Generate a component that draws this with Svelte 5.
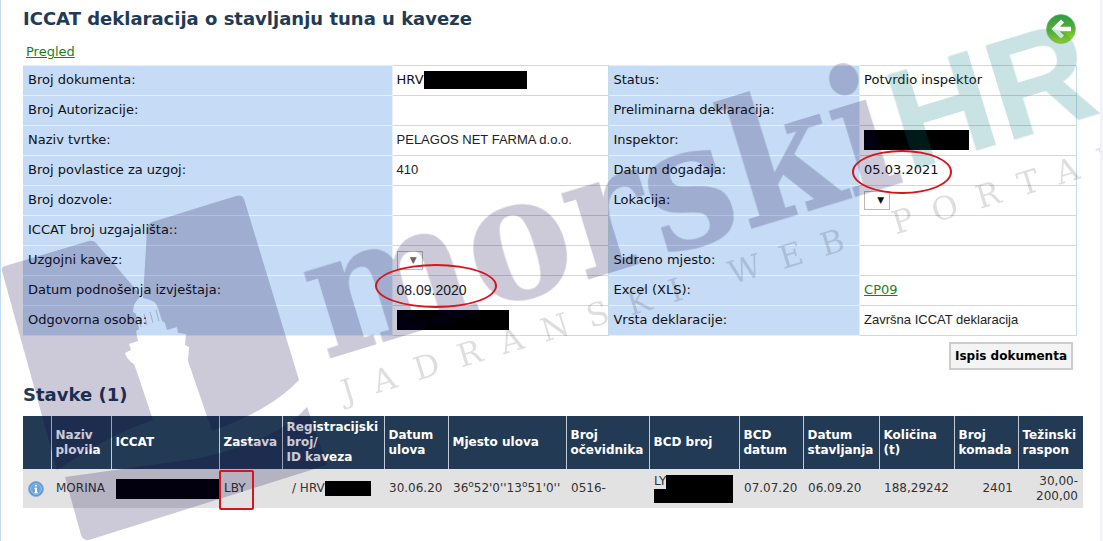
<script>
	const ROWS = [
		[
			{ label: 'Broj dokumenta:', text: 'HRV', hidden: 103 },
			{ label: 'Status:', text: 'Potvrdio inspektor' }
		],
		[{ label: 'Broj Autorizacije:' }, { label: 'Preliminarna deklaracija:' }],
		[
			{ label: 'Naziv tvrtke:', text: 'PELAGOS NET FARMA d.o.o.', plain: true },
			{ label: 'Inspektor:', hidden: 105, tall: true }
		],
		[
			{ label: 'Broj povlastice za uzgoj:', text: '410', plain: true },
			{ label: 'Datum događaja:', text: '05.03.2021', ring: 'small' }
		],
		[{ label: 'Broj dozvole:' }, { label: 'Lokacija:', select: 'lokacija' }],
		[{ label: 'ICCAT broj uzgajališta::' }, { label: '' }],
		[{ label: 'Uzgojni kavez:', select: 'kavez', muted: true }, { label: 'Sidreno mjesto:' }],
		[
			{ label: 'Datum podnošenja izvještaja:', text: '08.09.2020', plain: true, big: true, ring: 'large' },
			{ label: 'Excel (XLS):', link: 'CP09' }
		],
		[
			{ label: 'Odgovorna osoba:', hidden: 112, tall: true },
			{ label: 'Vrsta deklaracije:', text: 'Završna ICCAT deklaracija', plain: true }
		]
	];

	// w is the relative width of the column
	const COLUMNS = [
		{ name: '', w: 28 },
		{ name: 'Naziv plovila', w: 60 },
		{ name: 'ICCAT', w: 108 },
		{ name: 'Zastava', w: 63 },
		{ name: 'Registracijski broj/\nID kaveza', w: 102 },
		{ name: 'Datum ulova', w: 64 },
		{ name: 'Mjesto ulova', w: 118 },
		{ name: 'Broj očevidnika', w: 83 },
		{ name: 'BCD broj', w: 90 },
		{ name: 'BCD datum', w: 64 },
		{ name: 'Datum stavljanja', w: 76 },
		{ name: 'Količina (t)', w: 75 },
		{ name: 'Broj komada', w: 64 },
		{ name: 'Težinski raspon', w: 65 }
	];
	const total = COLUMNS.reduce((sum, c) => sum + c.w, 0);
</script>

<main class="page">
	<header class="top">
		<h1>ICCAT deklaracija o stavljanju tuna u kaveze</h1>
		<a class="back" href="#natrag" aria-label="Natrag">
			<svg viewBox="0 0 30 30" width="30" height="30">
				<defs>
					<linearGradient id="green" x1="0" y1="0" x2="0" y2="1">
						<stop offset="0" stop-color="#2a9a4b" />
						<stop offset="0.45" stop-color="#4fae35" />
						<stop offset="1" stop-color="#b2e012" />
					</linearGradient>
				</defs>
				<circle cx="15" cy="15" r="14.5" fill="url(#green)" stroke="#7cc06a" stroke-width="0.6" />
				<path d="M16.5 7 L8.5 15 L16.5 23 M9 15 H25" fill="none" stroke="#fff" stroke-width="4.4" />
			</svg>
		</a>
	</header>

	<nav><a href="#pregled">Pregled</a></nav>

	<table class="form">
		<colgroup>
			<col class="wide" /><col class="value" /><col class="narrow" /><col class="value" />
		</colgroup>
		<tbody>
			{#each ROWS as row}
				<tr>
					{#each row as cell}
						<th scope="row">
							{#if cell.select}
								<label for={cell.select}>{cell.label}</label>
							{:else}
								{cell.label}
							{/if}
						</th>
						<td>
							<div class="field" class:plain={cell.plain} class:big={cell.big}>
								{#if cell.text}<span class={cell.ring ? `ring ring-${cell.ring}` : ''}>{cell.text}</span>{/if}
								{#if cell.hidden}<span class="redacted" class:tall={cell.tall} style="width: {cell.hidden}px"></span>{/if}
								{#if cell.link}<a href="#xls">{cell.link}</a>{/if}
								{#if cell.select}
									<span class="picker" class:muted={cell.muted}>
										<select id={cell.select}><option></option></select>
									</span>
								{/if}
							</div>
						</td>
					{/each}
				</tr>
			{/each}
		</tbody>
	</table>

	<div class="actions">
		<button type="button">Ispis dokumenta</button>
	</div>

	<h2>Stavke (1)</h2>

	<table class="items">
		<colgroup>
			{#each COLUMNS as c}<col style="width: {(c.w / total) * 100}%" />{/each}
		</colgroup>
		<thead>
			<tr>
				{#each COLUMNS as c}<th scope="col">{c.name}</th>{/each}
			</tr>
		</thead>
		<tbody>
			<tr>
				<td>
					<svg class="info" viewBox="0 0 16 16" width="16" height="16" role="img" aria-label="Info">
						<circle cx="8" cy="8" r="7.5" fill="#4f8fd0" stroke="#8db4de" />
						<circle cx="8" cy="8" r="5.5" fill="#6ba5de" stroke="#a9cbec" stroke-width="0.8" />
						<path d="M7 4h2v1.6H7z M6.3 6.8H9v4.4h.8v1H6.3v-1H7V7.8h-.7z" fill="#fff" />
					</svg>
				</td>
				<td>MORINA</td>
				<td><span class="redacted tall"></span></td>
				<td><span class="marked">LBY</span></td>
				<td><div class="field reg">/ HRV<span class="redacted short" style="width: 46px"></span></div></td>
				<td>30.06.20</td>
				<td>36<sup>o</sup>52'0''13<sup>o</sup>51'0''</td>
				<td>0516-</td>
				<td class="bcd">
					<div class="field">LY<span class="redacted rest"></span></div>
					<span class="redacted low"></span>
				</td>
				<td>07.07.20</td>
				<td>06.09.20</td>
				<td class="num">188,29242</td>
				<td class="num">2401</td>
				<td class="num">30,00-<br />200,00</td>
			</tr>
		</tbody>
	</table>

	<!-- portal watermark, lies over the whole sheet -->
	<svg class="watermark" width="1103" height="541" viewBox="0 0 1103 541" aria-hidden="true">
		<g class="navy">
			<path
				d="M5 266 L89 241 Q93 240 96 243 L138 292 L140 297 Q133 303 133 312 L136 314 L139 329 L136 331
				L138 341 L129 344 L131 350 L125 353 Q127 360 134 364 L138 375 L153 420 Q109 435 57 470 L2 271 Q1 267 5 266 Z"
			/>
			<path
				d="M147 230 Q147 224 152 222 L236 196 Q242 194 244 199 L299 380 Q271 410 212 431 L188 361 L189 347
				L185 345 L186 334 L178 333 L177 327 L167 330 L165 323 L162 321 L158 308 Q156 300 143 298 Z"
			/>
			<path d="M307 407 L327 465 L89 540 Q83 541 81 535 L65 477 Q130 468 200 458 Q278 440 307 407 Z" />
			<path d="M138 316 L141 327 M144 314 L147 325 M150 312 L153 323 M156 310 L159 321" class="rails" />
			<text class="morski" transform="translate(325 360) rotate(-17)">morski</text>
		</g>
		<text class="hr" transform="translate(907 172) rotate(-17)">HR</text>
		<g class="tagline" transform="translate(345 403) rotate(-17)">
			<text>JADRANSKI</text>
			<text x="405">WEB</text>
			<text x="576">PORTAL</text>
		</g>
	</svg>
</main>

<style>
	:global(body) {
		margin: 0;
		background: #fff;
	}
	.page {
		position: relative;
		box-sizing: border-box;
		min-height: 100vh;
		padding: 8px 17px 32px 22px;
		overflow: hidden;
		border-left: 1px solid #c3d9ee;
		border-right: 3px solid #f2f2f7;
		color: #111;
		font: 13px/16px 'DejaVu Sans', sans-serif;
	}
	.top {
		display: flex;
		justify-content: space-between;
		height: 36px;
		padding-right: 7px;
	}
	h1,
	h2 {
		margin: 0;
		color: #233a54;
		font-size: 18px;
		line-height: 22px;
	}
	.back {
		height: 30px;
		padding-top: 6px;
	}
	.back svg {
		display: block;
	}
	a {
		color: #1a7f1a;
	}
	nav {
		padding: 0 3px 5px;
	}
	table {
		border-collapse: collapse;
		table-layout: fixed;
	}
	.form {
		width: calc(100% - 6px);
	}
	.wide {
		width: 35%;
	}
	.value {
		width: 20.6%;
	}
	.narrow {
		width: 23.8%;
	}
	.form th,
	.form td {
		box-sizing: border-box;
		height: 30px;
		padding: 0 4px 1px;
		border: 1px solid #c5dbe6;
		text-align: left;
		font-weight: normal;
	}
	.form th {
		border-color: #e6f0fa;
		border-left-color: #c6dbf5;
		background: #c6dbf5;
	}
	.field {
		display: flex;
		align-items: center;
		white-space: nowrap;
	}
	.plain {
		color: #222;
		font-family: 'Liberation Sans', sans-serif;
	}
	.big {
		font-size: 14px;
	}
	.redacted {
		display: block;
		height: 18px;
		background: #000;
	}
	.tall {
		height: 20px;
	}
	.short {
		height: 15px;
	}
	.ring {
		position: relative;
	}
	.ring::after,
	.marked::after {
		content: '';
		position: absolute;
		z-index: 2;
		box-sizing: border-box;
		border: 2px solid #d8141c;
	}
	.ring::after {
		border-radius: 50%;
	}
	.ring-small::after {
		inset: -12px -13px -16px -12px;
	}
	.ring-large::after {
		inset: -18px -30px -10px -22px;
	}
	.picker {
		position: relative;
		display: block;
		height: 19px;
	}
	.picker::after {
		content: '▼';
		position: absolute;
		top: 1px;
		right: 6px;
		font: 9px/16px 'DejaVu Sans', sans-serif;
		pointer-events: none;
	}
	select {
		display: block;
		width: 26px;
		height: 19px;
		appearance: none;
		border: 1px solid #b9b9b9;
		border-radius: 0;
		background: #fff;
	}
	.muted {
		color: #666;
	}
	.actions {
		display: flex;
		justify-content: flex-end;
		padding: 6px 10px 0;
	}
	button {
		height: 28px;
		padding: 0 4px;
		border: 2px solid #ccc;
		background: #f4f4f4;
		color: #000;
		font: bold 12px/16px 'DejaVu Sans', sans-serif;
	}
	h2 {
		padding: 14px 0 10px;
	}
	.items {
		width: 100%;
		font-size: 12px;
		line-height: 15px;
	}
	.items th {
		box-sizing: border-box;
		height: 53px;
		padding: 0 0 0 4px;
		border-left: 1px solid #c3ccd6;
		background: #233a54;
		color: #fff;
		font-size: 12px;
		text-align: left;
		white-space: pre-line;
	}
	.items th:first-child {
		border-left: 0;
	}
	.items td {
		height: 39px;
		padding: 0 0 0 5px;
		background: #e2e2e2;
		color: #333;
		white-space: nowrap;
	}
	.items .num {
		padding: 0 5px 0 0;
		text-align: right;
	}
	.info {
		display: block;
	}
	.reg {
		padding-left: 5px;
	}
	.bcd .redacted {
		height: 14px;
		margin-right: 6px;
	}
	.bcd .rest {
		flex: 1;
	}
	.marked {
		position: relative;
	}
	.marked::after {
		inset: -11px -8px -15px -5px;
		border-radius: 2px;
	}
	sup {
		font-size: 9px;
		line-height: 0;
	}
	.watermark {
		position: absolute;
		top: 0;
		left: -1px;
		pointer-events: none;
	}
	.navy {
		fill: #0e0046;
		opacity: 0.21;
	}
	.rails {
		stroke: #0e0046;
		stroke-width: 1;
	}
	.morski {
		font: bold 174px 'DejaVu Serif Condensed', 'DejaVu Serif', serif;
	}
	.hr {
		fill: #00787d;
		opacity: 0.21;
		font: bold 142px 'Liberation Sans', sans-serif;
	}
	.tagline {
		fill: #000;
		opacity: 0.13;
		font: 32px 'DejaVu Serif', serif;
		letter-spacing: 20px;
	}
</style>
